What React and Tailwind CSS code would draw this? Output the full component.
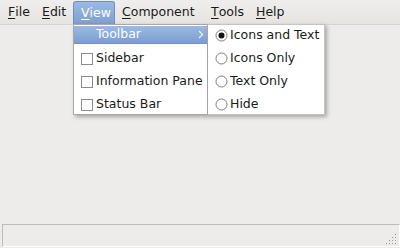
import React from "react";

const menus = [
  { key: "F", rest: "ile", w: "w-[34px]" },
  { key: "E", rest: "dit", w: "w-[38px]" },
  { key: "V", rest: "iew", w: "w-[42px]", open: true },
  { key: "C", rest: "omponent", w: "w-[89px]" },
  { key: "T", rest: "ools", w: "w-[45px]" },
  { key: "H", rest: "elp", w: "w-[40px]" },
];

const Check = () => (
  <span className="inline-block w-[12px] h-[12px] border border-[#8c8c8c] bg-white shrink-0" />
);

const Radio = ({ on }) => (
  <svg width="13" height="13" viewBox="0 0 13 13" className="shrink-0">
    <circle cx="6.5" cy="6.5" r="5.5" fill="#fff" stroke="#7d7d7d" strokeWidth="1" />
    {on && <circle cx="6.5" cy="6.5" r="3" fill="#111" />}
  </svg>
);

const Grip = () => (
  <svg width="12" height="12" viewBox="0 0 12 12">
    {[[10, 1], [10, 4], [7, 4], [10, 7], [7, 7], [4, 7], [10, 10], [7, 10], [4, 10], [1, 10]].map(([x, y], i) => (
      <rect key={i} x={x} y={y} width="1" height="1" fill="#9a9a9a" />
    ))}
  </svg>
);

export default function App() {
  return (
    <div
      className="relative w-[400px] h-[248px] bg-[#edeceb] flex flex-col text-[12.5px] text-[#1a1a1a] overflow-hidden"
      style={{ fontFamily: '"DejaVu Sans", sans-serif' }}
    >
      {/* menubar */}
      <div className="h-[25px] flex items-stretch pl-[1px] pt-[1px] border-b border-[#d6d4d0] bg-gradient-to-b from-[#efeeec] to-[#e6e4e1]">
        {menus.map((m) => (
          <div
            key={m.key}
            className={`${m.w} pl-[7px] flex items-center ${
              m.open
                ? "bg-gradient-to-b from-[#9bb9e3] to-[#7f9fd2] border border-b-0 border-[#6f8fc3] rounded-t-[3px] pl-[6px] text-white"
                : ""
            }`}
          >
            <span className="underline underline-offset-2 decoration-1">{m.key}</span>
            <span>{m.rest}</span>
          </div>
        ))}
      </div>

      <div className="flex-1" />

      {/* status bar */}
      <div className="h-[23px] ml-[2px] mb-[1px] border-t border-l border-[#bcbcbc] border-r border-b border-r-white border-b-white flex justify-end items-end pr-[2px] pb-[1px]">
        <Grip />
      </div>

      {/* View menu */}
      <div className="absolute left-[73px] top-[24px] w-[135px] h-[91px] bg-white border border-[#a9a9a9] shadow-[2px_2px_4px_rgba(0,0,0,0.3)] overflow-hidden">
        <div className="mt-[1px] h-[18px] flex items-center pl-[22px] pr-[3px] text-white bg-gradient-to-b from-[#9bb9e3] to-[#7c9dd1] border-b border-[#7393c8]">
          <span className="flex-1">Toolbar</span>
          <svg width="6" height="9" viewBox="0 0 6 9">
            <path d="M1 1 L4.5 4.5 L1 8" fill="none" stroke="#e8eefa" strokeWidth="1.3" />
          </svg>
        </div>
        <div className="mt-[3px]">
          {["Sidebar", "Information Pane", "Status Bar"].map((t) => (
            <div key={t} className="h-[23px] flex items-center pl-[7px] gap-[3px]">
              <Check />
              <span>{t}</span>
            </div>
          ))}
        </div>
      </div>

      {/* Toolbar submenu */}
      <div className="absolute left-[208px] top-[24px] w-[117px] h-[91px] bg-white border border-[#c4c4c4] border-l-0 shadow-[2px_2px_4px_rgba(0,0,0,0.3)] overflow-hidden">
        <div className="mt-[1px] h-[18px] flex items-center pl-[7px] gap-[2px]">
          <Radio on />
          <span>Icons and Text</span>
        </div>
        <div className="mt-[3px]">
          {["Icons Only", "Text Only", "Hide"].map((t) => (
            <div key={t} className="h-[23px] flex items-center pl-[7px] gap-[2px]">
              <Radio />
              <span>{t}</span>
            </div>
          ))}
        </div>
      </div>
    </div>
  );
}
